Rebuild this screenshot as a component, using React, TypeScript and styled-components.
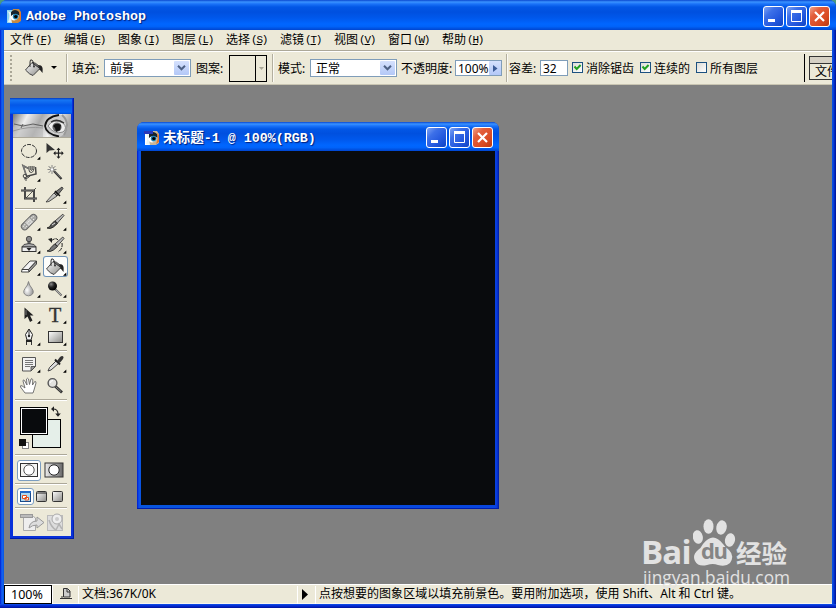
import React from 'react';
import styled, { createGlobalStyle, css } from 'styled-components';

const Global = createGlobalStyle`
  html, body { margin: 0; padding: 0; overflow: hidden; background: #4a9a80; }
  * { box-sizing: border-box; }
  body {
    font: 12px/16px "Noto Sans", "Noto Sans CJK SC", sans-serif;
    color: #000;
  }
  svg { display: block; flex: none; }
`;

const cream = '#ece9d8';
const titleFill = css`
  background: linear-gradient(180deg,
    #0a48d0 0, #3a93ff 2px, #1a72f8 4px, #0257e6 7px, #0050df 40%,
    #0058ec 60%, #0066ff 80%, #0063fa 88%, #0045cf 100%);
`;

const Window = styled.div`
  width: 836px;
  height: 608px;
  display: flex;
  flex-direction: column;
  position: relative;
  border-radius: 7px 7px 0 0;
  overflow: hidden;
  padding: 0 4px 4px;
  background: linear-gradient(90deg, #0019cf 0, #0a3fe0 1px, #1464f4 2px, #0855dd 4px, #0855dd 832px, #0a48e0 833px, #0020b8 835px, #00138c 836px);
`;

const BottomEdge = styled.div`
  height: 4px;
  flex: none;
  margin: 0 -4px -4px;
  background: linear-gradient(180deg, #1457ec 0, #0838dc 1px, #001dc0 3px, #00138c 4px);
`;

const TitleBar = styled.div`
  ${titleFill}
  height: 30px;
  flex: none;
  margin: 0 -4px;
  padding: 2px 6px 0 6px;
  display: flex;
  align-items: center;
`;

const TitleText = styled.div<{ $ml?: number }>`
  flex: 1;
  margin-left: ${p => p.$ml ?? 4}px;
  padding-top: 2px;
  color: #fff;
  white-space: pre;
  font: bold 13.33px/18px "Liberation Mono", "Noto Sans CJK SC", monospace;
  text-shadow: 1px 1px 1px #00207c;
  span { font-size: 13.6px; }
`;

const Controls = styled.div`
  display: flex;
  gap: 2px;
`;

const ControlButton = styled.div<{ $close?: boolean }>`
  width: 21px;
  height: 21px;
  border: 1px solid #fff;
  border-radius: 3px;
  display: grid;
  place-items: center;
  background: ${p => p.$close
    ? 'linear-gradient(135deg, #f0a38c 0, #e35e3b 30%, #d94a22 70%, #b93a12 100%)'
    : 'linear-gradient(135deg, #7fa4f4 0, #3d70e8 30%, #2458de 65%, #0f44c4 100%)'};
`;

const MenuBar = styled.div`
  height: 21px;
  flex: none;
  background: ${cream};
  border-bottom: 1px solid #aca899;
  display: flex;
  padding-left: 6px;
`;

const MenuItem = styled.div`
  width: 54px;
  display: flex;
  font-size: 12px;
  line-height: 20px;
  white-space: nowrap;
`;

const Shortcut = styled.span`
  margin-left: 1px;
  font: 11px/21px "Liberation Mono", monospace;
  letter-spacing: -1.2px;
  u { text-underline-offset: 1px; }
`;

const OptionsBar = styled.div`
  height: 34px;
  flex: none;
  background: ${cream};
  border-top: 1px solid #fff;
  border-bottom: 1px solid #c9c5b2;
  display: flex;
  align-items: center;
  overflow: hidden;
  padding-left: 6px;
`;

const Grip = styled.div`
  width: 2px;
  height: 26px;
  flex: none;
  margin-right: 10px;
  background: repeating-linear-gradient(180deg, #aaa797 0 2px, transparent 2px 4px);
`;

const BucketDrop = styled.div`
  display: flex;
  flex: none;
  align-items: center;
  gap: 4px;
`;

const Rule = styled.div<{ $ml: number; $mr: number; $dark?: boolean }>`
  width: ${p => (p.$dark ? 1 : 2)}px;
  height: 28px;
  flex: none;
  margin: 0 ${p => p.$mr}px 0 ${p => p.$ml}px;
  background: ${p => (p.$dark ? '#000' : '#b3af9f')};
  border-right: ${p => (p.$dark ? 'none' : '1px solid #fbfaf4')};
`;

const Label = styled.div<{ $w: number; $ml?: number }>`
  width: ${p => p.$w}px;
  margin-left: ${p => p.$ml ?? 0}px;
  flex: none;
  white-space: nowrap;
  line-height: 18px;
  padding-top: 1px;
`;

const Field = styled.div<{ $w: number; $h?: number }>`
  width: ${p => p.$w}px;
  height: ${p => p.$h ?? 18}px;
  flex: none;
  border: 1px solid #7f9db9;
  background: #fff;
  display: flex;
  justify-content: space-between;
  align-items: center;
  line-height: 15px;
  padding: 0 1px 0 ${p => (p.$h ? 2 : 5)}px;
  overflow: hidden;
`;

const DropButton = styled.div<{ $narrow?: boolean }>`
  width: ${p => (p.$narrow ? 14 : 15)}px;
  height: 14px;
  flex: none;
  border-radius: 1px;
  display: grid;
  place-items: center;
  background: linear-gradient(180deg, #d5e1fd, #b3c8f7);
`;

const PatternBox = styled.div`
  width: 38px;
  height: 27px;
  flex: none;
  border: 1px solid #000;
  display: flex;
  align-items: center;
  margin-right: 5px;
`;

const PatternDrop = styled.div`
  margin-left: 25px;
  width: 11px;
  height: 25px;
  border-left: 1px solid #000;
  display: grid;
  place-items: center;
`;

const CheckBox = styled.div<{ $ml?: number }>`
  width: 11px;
  height: 11px;
  flex: none;
  border: 1px solid #1c5180;
  background: linear-gradient(135deg, #dcdcd7, #fff);
  margin: 0 3px 1px ${p => p.$ml ?? 0}px;
  display: grid;
  place-items: center;
`;

const Well = styled.div`
  width: 23px;
  height: 24px;
  flex: none;
  border: 1px solid #333;
  border-right: 0;
  background: linear-gradient(180deg, #d5d0c4 6px, #333 6px 7px, ${cream} 7px);
  padding: 7px 0 0 5px;
  white-space: nowrap;
  overflow: hidden;
`;

const Workspace = styled.div`
  flex: 1;
  min-height: 0;
  background: #808080;
  display: flex;
  align-items: flex-start;
  padding-left: 6px;
`;

const Palette = styled.div`
  width: 64px;
  height: 441px;
  flex: none;
  margin-top: 13px;
  padding: 0 3px 3px;
  background: #0831d9;
  border: solid #001eac;
  border-width: 0 1px 1px 0;
`;

const PaletteTitle = styled.div`
  height: 16px;
  margin: 0 -2px 0 -3px;
  background: linear-gradient(180deg, #0638bc 0, #1676f4 2px, #0458e8 7px, #0468fc 14px, #0050dc 16px);
`;

const PaletteBody = styled.div`
  width: 58px;
  height: 422px;
  background: ${cream};
  display: flex;
  flex-direction: column;
`;

const ToolGroup = styled.div<{ $top: number; $bottom: number; $gap?: number }>`
  display: grid;
  flex: none;
  grid-template-columns: 26px 26px;
  grid-auto-rows: 22px;
  row-gap: ${p => p.$gap ?? 0}px;
  padding: ${p => p.$top}px 0 ${p => p.$bottom}px 3px;
`;

const GroupLine = styled.div`
  height: 2px;
  flex: none;
  margin: 0 4px 0 2px;
  background: #aca899;
  border-bottom: 1px solid #fff;
`;

const ToolCell = styled.div<{ $on?: boolean }>`
  width: ${p => (p.$on ? 25 : 26)}px;
  height: ${p => (p.$on ? 21 : 22)}px;
  margin-left: ${p => (p.$on ? 1 : 0)}px;
  border-radius: 3px;
  background: ${p => (p.$on ? '#fdfdfb' : 'transparent')};
  box-shadow: ${p => (p.$on ? 'inset 0 0 0 1px #6f94b8' : 'none')};
  svg { margin-left: ${p => (p.$on ? -1 : 0)}px; }
`;

const ModeRow = styled.div<{ $h: number; $pl: number }>`
  height: ${p => p.$h}px;
  flex: none;
  padding: 2px 0 0 ${p => p.$pl}px;
  display: flex;
  align-items: center;
`;

const ModeButton = styled.div<{ $w: number; $h: number; $on?: boolean }>`
  width: ${p => p.$w}px;
  height: ${p => p.$h}px;
  display: grid;
  place-items: center;
  border-radius: 3px;
  border: 1px solid ${p => (p.$on ? '#7b9dc0' : 'transparent')};
  background: ${p => (p.$on ? '#fff' : 'transparent')};
`;

const DocWindow = styled.div`
  width: 362px;
  height: 387px;
  flex: none;
  margin: 37px 0 0 63px;
  border-radius: 7px 7px 0 0;
  overflow: hidden;
  padding: 0 4px 4px;
  background: linear-gradient(90deg, #0019cf 0, #0c50ee 2px, #0855dd 4px, #0845dd 358px, #0838dc 360px, #001a9c 362px);
  border-bottom: 1px solid #001eac;
  display: flex;
  flex-direction: column;
`;

const DocTitle = styled(TitleBar)`
  height: 29px;
  padding: 2px 6px 0 7px;
`;

const Canvas = styled.div`
  height: 354px;
  flex: none;
  background: #090b0d;
`;

const StatusBar = styled.div`
  height: 20px;
  flex: none;
  background: ${cream};
  border-top: 1px solid #fff;
  display: flex;
  align-items: center;
  line-height: 16px;
  box-shadow: inset 0 -1px #f8f6ee;
`;

const ZoomBox = styled.div`
  width: 48px;
  height: 19px;
  border: 1px solid #000;
  background: #fff;
  font-size: 12.5px;
  line-height: 17px;
  padding-left: 6px;
`;

const StatusIcon = styled.div`
  width: 27px;
  height: 18px;
  padding: 2px 0 0 7px;
  border-left: 1px solid #fff;
  border-right: 1px solid #fff;
  margin-right: 3px;
`;

const DocSize = styled.div`
  width: 216px;
  height: 18px;
  white-space: nowrap;
  border-right: 1px solid #fff;
`;

const Arrow = styled.div`
  width: 18px;
  height: 18px;
  padding: 3px 0 0 4px;
  border-right: 1px solid #fff;
`;

const Hint = styled.div`
  height: 18px;
  padding-left: 3px;
  white-space: nowrap;
  letter-spacing: 0.02px;
`;

const Watermark = styled.div`
  position: absolute;
  left: 641px;
  top: 518px;
  width: 152px;
  height: 74px;
  color: #e2e2e2;
  pointer-events: none;
`;

const MarkRow = styled.div`
  height: 51px;
  display: flex;
  align-items: flex-end;
  white-space: nowrap;
`;

const MarkLatin = styled.span`
  font: bold 33px/34px "Open Sans", sans-serif;
  width: 52px;
  letter-spacing: -0.8px;
`;

const MarkPaw = styled.div`
  width: 43px;
  height: 51px;
  position: relative;
`;

const MarkDu = styled.span`
  position: absolute;
  left: 8px;
  top: 18px;
  color: #858585;
  font: bold 22px/28px "Open Sans", sans-serif;
  letter-spacing: -1.5px;
`;

const MarkHan = styled.span`
  font: bold 25.5px/35px "Noto Sans CJK SC", sans-serif;
`;

const MarkUrl = styled.div`
  margin: 0 0 0 2px;
  font: 17.3px/17px "Open Sans", sans-serif;
  white-space: nowrap;
`;

const DefsSvg = styled.svg`
  position: absolute;
`;

const Defs = () => (
  <DefsSvg width="0" height="0">
    <defs>
      <linearGradient id="metal" x1="0" y1="0" x2="1" y2="1">
        <stop offset="0" stopColor="#fff" /><stop offset="1" stopColor="#8a8a86" />
      </linearGradient>
      <linearGradient id="steel" x1="0" y1="0" x2="1" y2="0">
        <stop offset="0" stopColor="#333" /><stop offset=".5" stopColor="#ccc" /><stop offset="1" stopColor="#444" />
      </linearGradient>
      <radialGradient id="ball" cx=".35" cy=".3" r=".7">
        <stop offset="0" stopColor="#888" /><stop offset=".5" stopColor="#222" /><stop offset="1" stopColor="#000" />
      </radialGradient>
      <radialGradient id="drop" cx=".35" cy=".6" r=".6">
        <stop offset="0" stopColor="#fff" /><stop offset="1" stopColor="#999" />
      </radialGradient>
      <linearGradient id="fade" x1="0" y1="0" x2="1" y2="0">
        <stop offset="0" stopColor="#eee" /><stop offset="1" stopColor="#666" />
      </linearGradient>
      <linearGradient id="fur" x1="0" y1="0" x2="1" y2=".2">
        <stop offset="0" stopColor="#777" /><stop offset=".25" stopColor="#eee" /><stop offset=".5" stopColor="#aaa" />
        <stop offset=".75" stopColor="#f4f4f4" /><stop offset="1" stopColor="#aaa" />
      </linearGradient>
    </defs>
  </DefsSvg>
);

const AppIcon = ({ doc }: { doc?: boolean }) => (
  <svg width="16" height="16" viewBox="0 0 16 16">
    <path d="M1 2H9V15H1Z" fill={doc ? '#fff' : '#8fd4f0'} />
    <path d="M1 3C4 5 4 9 2 14L7 15L9 6Z" fill="#e8f5f5" />
    <path d="M7 1L13 1L15 4V13L12 15H6Q4 7 7 1Z" fill={doc ? '#c9b699' : '#c48a42'} />
    <path d="M5 4Q9 0 13 4Q14 6 13 9Q9 4 5 9Z" fill="#17232c" />
    <path d="M4 9.5Q7 4 13 7.5Q12 12 8 12.5Q5 12 4 9.5Z" fill="#fff" />
    <circle cx="9.6" cy="8.6" r="2.8" fill="#1f83b4" />
    <circle cx="9.8" cy="8.6" r="1.7" fill="#000" />
    <path d="M13 3L15 5V12L12 14L14 8Z" fill="#e87828" />
    {doc && <path d="M0 1H9V4H0Z" fill="#2738b8" />}
  </svg>
);

const WindowButtons = () => (
  <Controls>
    <ControlButton><svg width="17" height="17"><rect x="3" y="11" width="7" height="3" fill="#fff" /></svg></ControlButton>
    <ControlButton><svg width="17" height="17"><path d="M3.5 3H13.5V13.5H3.5Z" fill="none" stroke="#fff" /><path d="M3 3.5H14" stroke="#fff" strokeWidth="3" /></svg></ControlButton>
    <ControlButton $close><svg width="17" height="17"><path d="M4 4L13 13M13 4L4 13" stroke="#fff" strokeWidth="2.2" /></svg></ControlButton>
  </Controls>
);

const Chevron = () => (
  <svg width="9" height="6"><path d="M1 .8L4.5 4.3L8 .8" fill="none" stroke="#4d6185" strokeWidth="2" /></svg>
);

const Tick = () => (
  <svg width="9" height="9"><path d="M1.5 3.5L3.7 6L7.6 2" fill="none" stroke="#21a121" strokeWidth="2" /></svg>
);

const Bucket = () => (
  <g>
    <path d="M17 8C22 8 22 11 21.5 16L19 13L17 12Z" fill="#222" />
    <path d="M4.5 13L11 5.5L19 11.5L12 18.5Q9 18 4.5 13Z" fill="url(#metal)" stroke="#333" strokeWidth=".9" />
    <path d="M11 5.5L19 11.5L17 8Q14 5 11 5.5Z" fill="#777" stroke="#222" strokeWidth=".6" />
    <path d="M9 10V5Q9 2 11 3Q12.5 4 13 9" fill="none" stroke="#333" />
    <circle cx="13" cy="9.5" r="1" fill="#333" />
  </g>
);

const glyphs: Record<string, React.ReactNode> = {
  ellipse: <ellipse cx="13" cy="11" rx="7.5" ry="6.5" fill="none" stroke="#333" strokeWidth="1" strokeDasharray="4 1.1" />,
  move: <g>
    <path d="M4.5 3V13L7.5 10.5L13 10Z" fill="#333" />
    <path d="M16.5 8.5V18M12 13.2H21" stroke="#222" strokeWidth="1.2" />
    <path d="M14.5 10L16.5 7.8L18.5 10ZM14.5 16.5L16.5 18.7L18.5 16.5ZM13.5 11L11.3 13.2L13.5 15.4ZM19.5 11L21.7 13.2L19.5 15.4Z" fill="#222" />
  </g>,
  lasso: <g fill="none" stroke="#444">
    <path d="M10.5 14L7 3.5L12.5 6.5M19.5 5L20 12L10 14.5" strokeWidth="1.5" />
    <path d="M10.5 14L7 3.5L12.5 6.5" stroke="#bbb" strokeWidth=".5" />
    <path d="M13 4V8Q13 10.5 15.5 10.5Q18 10 18 4M14.8 4V8Q15.5 9 16.2 8V4" />
    <circle cx="9" cy="14" r="1.8" /><path d="M10 16V19M8 17Q13 16 14 14" />
  </g>,
  wand: <g>
    <path d="M10 3V12M5.5 7.5H14.5M6.5 4L13.5 11M13.5 4L6.5 11" stroke="#888" />
    <path d="M8 5.5L12 9.5M12 5.5L8 9.5" stroke="#555" strokeDasharray="1 1" />
    <circle cx="10" cy="7.5" r="1.3" fill="#fff" />
    <path d="M12 9L19.5 17" stroke="#333" strokeWidth="2.2" /><path d="M12.5 9L18.5 15.5" stroke="#999" strokeWidth=".6" />
  </g>,
  crop: <g fill="none" stroke="#333" strokeWidth="2">
    <path d="M9 3V14.5H21M5 6.5H18V18" /><path d="M10 14L20 4" strokeWidth=".8" />
    <path d="M9 3V14.5H21M5 6.5H18V18" stroke="#888" strokeWidth=".5" />
  </g>,
  slice: <g>
    <path d="M12 9L15 12L7 17.5L4 18Z" fill="url(#metal)" stroke="#333" strokeWidth=".8" />
    <path d="M12 9L20 3L21 4.5L15 12Z" fill="#777" stroke="#222" strokeWidth=".8" />
    <path d="M13 7L18 12" stroke="#111" strokeWidth="1.5" />
  </g>,
  heal: <g transform="rotate(-45 13 11)">
    <rect x="3.5" y="7.8" width="19" height="6.6" rx="3.3" fill="#a9a9a5" stroke="#666" />
    <rect x="9.5" y="8.2" width="7" height="5.8" fill="#c8c8c5" stroke="#888" strokeWidth=".5" />
    <path d="M6 9.5V10.5M6 12V13M8 9.5V10.5M8 12V13M18 9.5V10.5M18 12V13M20 9.5V10.5M11 10V11M13 10V11M15 10V11M11 12.5V13.5M13 12.5V13.5M15 12.5V13.5" stroke="#f6f6f6" />
  </g>,
  brush: <g>
    <path d="M20.8 3.2L22 4.5L15.5 12L13 10Z" fill="#bbb" stroke="#222" strokeWidth=".8" />
    <path d="M12.5 10L15.5 12.5L11.5 16Q8 18.5 5 17Q8 16.5 9 13.5Z" fill="#555" stroke="#111" strokeWidth=".8" />
    <path d="M10 14L13 12" stroke="#ddd" />
  </g>,
  stamp: <g>
    <path d="M12 6H14V12H12Z" fill="url(#steel)" stroke="#333" strokeWidth=".8" />
    <circle cx="13" cy="5" r="2.7" fill="#888" stroke="#333" strokeWidth=".8" />
    <path d="M8 10.5Q13 8.5 18 10.5L20 13H6Z" fill="#aaa" stroke="#333" strokeWidth=".8" />
    <rect x="6" y="13" width="14" height="4.5" fill="#eee" stroke="#333" />
    <path d="M10.5 14H15.5L13 17Z" fill="#222" />
  </g>,
  history: <g>
    <path d="M20.8 3L22 4.5L15.5 12L13 10Z" fill="#bbb" stroke="#222" strokeWidth=".8" />
    <path d="M12.5 10L15.5 12.5L11.5 16Q8 18.5 5 17Q8 16.5 9 13.5Z" fill="#777" stroke="#111" strokeWidth=".8" />
    <path d="M9 7Q14 3 16 6M20 9Q21 15 16 18" fill="none" stroke="#222" strokeDasharray="4 1" />
    <path d="M6 5L10 4L10 9Z" fill="#222" />
  </g>,
  eraser: <g stroke="#333" strokeWidth=".9" strokeLinejoin="round">
    <path d="M6 13.5L14 5H20.5L12.5 13.5Z" fill="#f4f4f4" /><path d="M12.5 13.5L20.5 5V8L13 16Z" fill="#999" /><path d="M6 13.5H12.5L13 16H5.5Z" fill="#fff" />
  </g>,
  bucket: <Bucket />,
  blur: <path d="M12.5 3.5Q13 7 16 10.5Q19 15 15 17.2Q12.5 18.5 10 17.2Q6 15 9 10.5Q12 7 12.5 3.5Z" fill="url(#drop)" stroke="#777" strokeWidth=".8" />,
  dodge: <g>
    <path d="M13 11L19.5 17.5" stroke="#666" strokeWidth="2" /><path d="M13 11L19 17" stroke="#ddd" strokeWidth=".6" />
    <circle cx="10.5" cy="8" r="4.5" fill="url(#ball)" />
  </g>,
  path: <g><path d="M8.5 3.5V15L11.5 12.5L14 18L16.5 16.5L14 11.5H17.5Z" fill="#222" /><path d="M10 6V11" stroke="#777" /></g>,
  pen: <g>
    <path d="M13 3L9.5 8.5L11 14H15L16.5 8.5Z" fill="#f5f5f5" stroke="#222" /><path d="M13 3V10" stroke="#333" />
    <circle cx="13" cy="10" r="1.2" fill="#222" /><rect x="10" y="14" width="6" height="2" fill="#222" /><path d="M10.5 16V19M15.5 16V19" stroke="#333" />
  </g>,
  rect: <rect x="6.5" y="5.5" width="14" height="11" fill="url(#metal)" stroke="#333" />,
  note: <g>
    <path d="M6.5 4.5H19.5V13L15 18H6.5Z" fill="#f2f2f2" stroke="#555" /><path d="M9 7.5H17M9 9.5H17M9 11.5H17M9 13.5H14" stroke="#777" />
    <path d="M15 18V13.5H19.5Z" fill="#999" stroke="#444" strokeWidth=".8" />
  </g>,
  dropper: <g>
    <path d="M14 8L16.5 10.5L9 17L6 18L7.5 14.5Z" fill="#ddd" stroke="#333" strokeWidth=".9" />
    <path d="M13 6.5L18 11.5" stroke="#222" strokeWidth="2" /><path d="M15 8L18 4Q20.5 2 21.5 4Q22 5.5 17.5 10Z" fill="#333" />
  </g>,
  hand: <path d="M9 18L4.5 12Q4 10 6 10.8L9 13L7 6Q7.2 4 8.5 5.5L11 10L10.5 4Q11.5 2.5 12.5 4L13.5 9.5L15 4Q16.2 3 16.8 4.8L16.5 10L18.7 6.5Q20 6 20 8L18 15L17 18Z" fill="#fff" stroke="#666" strokeWidth=".9" />,
  zoom: <g>
    <path d="M13 11L20 17.5" stroke="#333" strokeWidth="2.8" /><path d="M14 12L19 16.5" stroke="#aaa" strokeWidth=".7" />
    <circle cx="10.5" cy="8" r="4.4" fill="#e2e2df" stroke="#555" strokeWidth="1.4" /><path d="M8 8Q8.5 5.5 11 5.5" fill="none" stroke="#fff" />
  </g>,
  type: <text x="13" y="17.5" textAnchor="middle" fontFamily="Liberation Serif, serif" fontSize="20" stroke="#333" strokeWidth=".4" fill="#333">T</text>,
};

const Tool = ({ name, more, on }: { name: string; more?: boolean; on?: boolean }) => (
  <ToolCell $on={on}>
    <svg width="26" height="22" viewBox="0 0 26 22">
      {glyphs[name]}
      {more && <path d="M24.3 16.5V19.8H21Z" fill="#000" />}
    </svg>
  </ToolCell>
);

const EyeBanner = () => (
  <svg width="58" height="24" viewBox="0 0 58 24">
    <rect width="58" height="24" fill="url(#fur)" />
    <path d="M0 13L8 10L18 11L30 12L30 24H0Z" fill="#bbb" opacity=".6" />
    <path d="M1 10L10 12L20 10L30 12M10 10L8 14" fill="none" stroke="#555" strokeWidth=".9" />
    <path d="M0 17Q15 12 30 14" fill="none" stroke="#999" />
    <ellipse cx="43" cy="11.5" rx="12" ry="11.5" fill="#ccc" />
    <path d="M46 1Q33 3 32 12Q33 20 46 22.5" fill="none" stroke="#111" strokeWidth="1.8" />
    <path d="M35 12Q40 4 50 9Q55 14 50 18Q41 21 35 12Z" fill="#eee" stroke="#888" />
    <path d="M38 8Q44 4 51 9" fill="none" stroke="#333" strokeWidth="1.3" />
    <circle cx="44" cy="13" r="4.6" fill="#666" /><path d="M40 12Q43 8 48 11L47 16L43 18L42 14Z" fill="#111" />
    <path d="M49 1Q58 9 51 21" fill="none" stroke="#999" strokeWidth="2" />
    <path d="M0 23.5H58" stroke="#aca899" />
  </svg>
);

const ColorWells = () => (
  <svg width="58" height="53" viewBox="0 0 58 53">
    <rect x="19.5" y="18.5" width="28" height="28" fill="#e5efe9" stroke="#000" />
    <rect x="7.5" y="6.5" width="27" height="27" fill="#fff" stroke="#000" />
    <rect x="9" y="8" width="24" height="24" fill="#090b0d" />
    <path d="M40 8Q45 8 45 13" fill="none" stroke="#222" strokeWidth="1.2" />
    <path d="M38 8L41 5.2V10.8ZM42.2 12.5H47.8L45 15.7Z" fill="#222" />
    <rect x="9.5" y="41.5" width="6" height="6" fill="#fff" stroke="#888" /><rect x="6" y="38" width="7" height="7" fill="#111" />
  </svg>
);

const JumpIcons = () => (
  <svg width="58" height="24" viewBox="0 0 58 24">
    <path d="M10.5 5.5H20.5L22.5 7V19.5H10.5Z" fill="#eee" stroke="#aaa" /><rect x="7.5" y="3.5" width="12" height="3" fill="#bbb" stroke="#999" />
    <path d="M16 17Q17 10 24 10V6L31 11.5L24 17V14Q19 14 16 17Z" fill="#ddd" stroke="#999" />
    <rect x="34.5" y="4.5" width="15" height="15" fill="#ddd" stroke="#bbb" />
    <circle cx="44" cy="8" r="5" fill="#eee" stroke="#aaa" /><circle cx="44" cy="8" r="2" fill="#ccc" />
    <path d="M36 9Q38 16 43 19L46 13L49 18" fill="none" stroke="#b4b4b4" strokeWidth="1.5" />
  </svg>
);

const menus = [['文件', 'F'], ['编辑', 'E'], ['图象', 'I'], ['图层', 'L'], ['选择', 'S'], ['滤镜', 'T'], ['视图', 'V'], ['窗口', 'W'], ['帮助', 'H']];

const Toolbox = () => (
  <Palette>
    <PaletteTitle />
    <PaletteBody>
      <EyeBanner />
      <ToolGroup $top={2} $bottom={2}>
        <Tool name="ellipse" more /><Tool name="move" />
        <Tool name="lasso" more /><Tool name="wand" />
        <Tool name="crop" /><Tool name="slice" more />
      </ToolGroup>
      <GroupLine />
      <ToolGroup $top={1.2} $bottom={0.6} $gap={0.4}>
        <Tool name="heal" more /><Tool name="brush" more />
        <Tool name="stamp" more /><Tool name="history" more />
        <Tool name="eraser" more /><Tool name="bucket" more on />
        <Tool name="blur" more /><Tool name="dodge" more />
      </ToolGroup>
      <GroupLine />
      <ToolGroup $top={1} $bottom={2}>
        <Tool name="path" more /><Tool name="type" more />
        <Tool name="pen" more /><Tool name="rect" more />
      </ToolGroup>
      <GroupLine />
      <ToolGroup $top={1} $bottom={2}>
        <Tool name="note" more /><Tool name="dropper" more />
        <Tool name="hand" /><Tool name="zoom" />
      </ToolGroup>
      <GroupLine />
      <ColorWells />
      <GroupLine />
      <ModeRow $h={27} $pl={4}>
        <ModeButton $w={24} $h={21} $on>
          <svg width="20" height="16"><rect x="1.5" y="1.5" width="17" height="13" fill="#f4f4f2" stroke="#333" /><circle cx="10" cy="8" r="5.2" fill="#fff" stroke="#555" /></svg>
        </ModeButton>
        <ModeButton $w={25} $h={21}>
          <svg width="20" height="16"><rect x="1" y="1" width="18" height="14" fill="url(#fade)" stroke="#333" /><circle cx="10" cy="8" r="5.2" fill="#fff" stroke="#222" /></svg>
        </ModeButton>
      </ModeRow>
      <GroupLine />
      <ModeRow $h={22} $pl={4}>
        <ModeButton $w={17} $h={17} $on>
          <svg width="13" height="13"><rect x="1.5" y="1.5" width="10" height="10" fill="#acd9f1" stroke="#1a4a8a" /><path d="M1 2H12" stroke="#216ac8" strokeWidth="2" /><path d="M3.5 5.5H7.5V8.5H3.5ZM6 7.5H9.5V10H6Z" fill="#fff" stroke="#e5501b" /></svg>
        </ModeButton>
        <ModeButton $w={16} $h={16}>
          <svg width="12" height="12"><rect x=".5" y=".5" width="10" height="10" rx="1" fill="url(#metal)" stroke="#333" /><path d="M1 2H10" stroke="#222" /></svg>
        </ModeButton>
        <ModeButton $w={16} $h={16}>
          <svg width="12" height="12"><rect x=".5" y=".5" width="10" height="10" rx="1" fill="url(#metal)" stroke="#333" /></svg>
        </ModeButton>
      </ModeRow>
      <GroupLine />
      <ModeRow $h={27} $pl={0}><JumpIcons /></ModeRow>
    </PaletteBody>
  </Palette>
);

export default function App() {
  return (
    <>
      <Global />
      <Defs />
      <Window>
        <TitleBar>
          <AppIcon />
          <TitleText>Adobe Photoshop</TitleText>
          <WindowButtons />
        </TitleBar>
        <MenuBar>
          {menus.map(([name, key]) => (
            <MenuItem key={key}>{name}<Shortcut>(<u>{key}</u>)</Shortcut></MenuItem>
          ))}
        </MenuBar>
        <OptionsBar>
          <Grip />
          <BucketDrop>
            <svg width="25" height="22" viewBox="1 0 25 22"><Bucket /></svg>
            <svg width="6" height="4"><path d="M0 0H6L3 3Z" /></svg>
          </BucketDrop>
          <Rule $ml={9} $mr={4} />
          <Label $w={32}>填充:</Label>
          <Field $w={87}>前景<DropButton><Chevron /></DropButton></Field>
          <Label $w={33} $ml={5}>图案:</Label>
          <PatternBox><PatternDrop><svg width="5" height="3"><path d="M0 0H5L2.5 3Z" fill="#aaa797" /></svg></PatternDrop></PatternBox>
          <Rule $ml={0} $mr={4} />
          <Label $w={32}>模式:</Label>
          <Field $w={87}>正常<DropButton><Chevron /></DropButton></Field>
          <Label $w={54} $ml={4}>不透明度:</Label>
          <Field $w={47} $h={16}>100%<DropButton $narrow><svg width="5" height="7"><path d="M0 0L4.5 3.5L0 7Z" fill="#3c5c98" /></svg></DropButton></Field>
          <Rule $ml={4} $mr={1} />
          <Label $w={31}>容差:</Label>
          <Field $w={28} $h={16}>32</Field>
          <CheckBox $ml={4}><Tick /></CheckBox>
          <Label $w={54}>消除锯齿</Label>
          <CheckBox><Tick /></CheckBox>
          <Label $w={42}>连续的</Label>
          <CheckBox />
          <Label $w={48}>所有图层</Label>
          <Rule $ml={46} $mr={4} $dark />
          <Well>文件</Well>
        </OptionsBar>
        <Workspace>
          <Toolbox />
          <DocWindow>
            <DocTitle>
              <AppIcon doc />
              <TitleText $ml={3}><span>未标题</span>-1 @ 100%(RGB)</TitleText>
              <WindowButtons />
            </DocTitle>
            <Canvas />
          </DocWindow>
        </Workspace>
        <StatusBar>
          <ZoomBox>100%</ZoomBox>
          <StatusIcon>
            <svg width="13" height="12"><path d="M3.5 .5H7.5L10 3V9H3.5Z" fill="#ccc" stroke="#333" /><path d="M7 1V4H10M0 10.5H12M2 8V10" fill="none" stroke="#333" /></svg>
          </StatusIcon>
          <DocSize>文档:367K/0K</DocSize>
          <Arrow><svg width="7" height="11"><path d="M0 0L6 5.5L0 11Z" /></svg></Arrow>
          <Hint>点按想要的图象区域以填充前景色。要用附加选项，使用 Shift、Alt 和 Ctrl 键。</Hint>
        </StatusBar>
        <BottomEdge />
        <Watermark>
          <MarkRow>
            <MarkLatin>Bai</MarkLatin>
            <MarkPaw>
              <svg width="43" height="51" viewBox="0 0 43 51" fill="#e2e2e2">
                <ellipse cx="4.8" cy="19" rx="5" ry="6.8" transform="rotate(-12 4.8 19)" />
                <ellipse cx="15.5" cy="8.5" rx="5" ry="7.3" /><ellipse cx="28.5" cy="9.5" rx="5.2" ry="7.2" transform="rotate(12 28.5 9.5)" />
                <ellipse cx="37" cy="22" rx="5" ry="6.8" transform="rotate(12 37 22)" />
                <path d="M10 26Q20 13 30 26Q32 29 36 32Q42 38 37 45Q33 49 25 47Q20 45 14 47Q5 49 2 43Q-1 37 5 32Q8 30 10 26Z" />
              </svg>
              <MarkDu>du</MarkDu>
            </MarkPaw>
            <MarkHan>经验</MarkHan>
          </MarkRow>
          <MarkUrl>jingyan.baidu.com</MarkUrl>
        </Watermark>
      </Window>
    </>
  );
}
